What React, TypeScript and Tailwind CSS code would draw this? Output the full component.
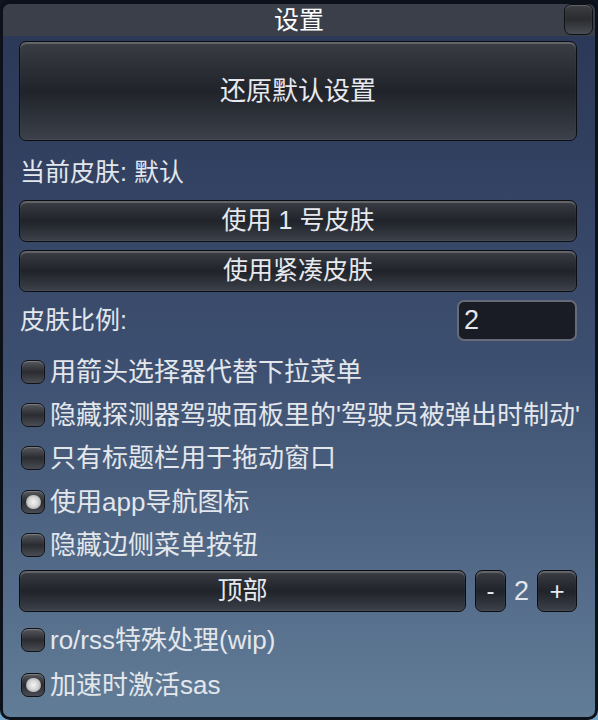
import React from "react";

const font = "font-['Liberation_Sans','Noto_Sans_CJK_SC',sans-serif]";

// KSP-ish bevelled button
const btn =
  "flex items-center justify-center rounded-[7px] border border-[#0b0d11] bg-linear-to-b from-[#3a3d43] via-[#202329] to-[#3c414b] shadow-[inset_0_2px_1px_rgba(255,255,255,0.22),inset_0_-1px_1px_rgba(255,255,255,0.06)] text-[#e6e9ee]";

interface CheckProps {
  label: string;
  checked?: boolean;
  className?: string;
}

const Check: React.FC<CheckProps> = ({ label, checked = false, className = "" }) => (
  <div className={`flex items-center gap-[5px] pl-[2px] ${className}`}>
    <div className="relative flex h-[24px] w-[24px] shrink-0 items-center justify-center rounded-[7px] border border-[#101216] bg-linear-to-b from-[#55585e] via-[#2a2c31] to-[#4a4d54] shadow-[inset_0_1px_1px_rgba(255,255,255,0.25)]">
      {checked && (
        <div className="h-[14px] w-[15px] rounded-full bg-[radial-gradient(circle,#f4f4f4_0%,#d6d6d6_45%,#8a8c90_100%)]" />
      )}
    </div>
    <span className="whitespace-nowrap text-[26px] leading-none text-[#e3e7ec]">{label}</span>
  </div>
);

export default function App() {
  return (
    <div className={`h-[720px] w-[598px] bg-linear-to-b from-[#0e1420] via-[#24344e] to-[#74a6cc] ${font}`}>
      <div className="flex h-full flex-col overflow-hidden rounded-[10px] border-[3px] border-t-[4px] border-[#0d1119] bg-linear-to-b from-[#2a3655] via-[#3d4f70] to-[#627d98]">
        {/* Title bar */}
        <div className="relative flex h-[32px] shrink-0 items-center justify-center rounded-t-[7px] bg-[#3b3f4a]">
          <span className="text-[25px] leading-none text-white">设置</span>
          <div className="absolute right-[2px] top-[0px] h-[31px] w-[29px] rounded-[7px] border border-[#0f1114] bg-linear-to-b from-[#3c3e43] via-[#2a2c30] to-[#4a4d53] shadow-[inset_0_1px_1px_rgba(255,255,255,0.2)]" />
        </div>

        {/* Body */}
        <div className="flex flex-col pl-[16px] pr-[18px]">
          <div className={`${btn} mt-[5px] h-[100px] text-[26px]`}>还原默认设置</div>

          <div className="flex h-[59px] items-center pl-[1px] pt-[4px] text-[25px] leading-none text-[#e3e7ec]">
            当前皮肤: 默认
          </div>

          <div className={`${btn} h-[42px] text-[25px]`}>使用 1 号皮肤</div>
          <div className={`${btn} mt-[8px] h-[42px] text-[25px]`}>使用紧凑皮肤</div>

          <div className="mt-[8px] flex h-[41px] items-center justify-between">
            <span className="pl-[1px] text-[25px] leading-none text-[#e3e7ec]">皮肤比例:</span>
            <div className="flex h-[41px] w-[120px] items-center rounded-[7px] border-2 border-[#656b78] bg-[#191c25] pl-[5px] text-[27px] leading-none text-[#e3e7ec]">
              2
            </div>
          </div>

          <div className="mt-[9px] flex flex-col">
            <Check className="h-[43px]" label="用箭头选择器代替下拉菜单" />
            <Check className="h-[43px]" label="隐藏探测器驾驶面板里的'驾驶员被弹出时制动'" />
            <Check className="h-[44px]" label="只有标题栏用于拖动窗口" />
            <Check className="h-[43px]" label="使用app导航图标" checked />
            <Check className="h-[43px]" label="隐藏边侧菜单按钮" />
          </div>

          <div className="mt-[4px] flex h-[42px] items-center">
            <div className={`${btn} h-[42px] w-[447px] text-[25px]`}>顶部</div>
            <div className={`${btn} ml-[9px] h-[42px] w-[31px] text-[24px]`}>-</div>
            <span className="w-[31px] text-center text-[27px] leading-none text-[#e3e7ec]">2</span>
            <div className={`${btn} h-[42px] w-[40px] text-[26px]`}>+</div>
          </div>

          <div className="mt-[6px] flex flex-col">
            <Check className="h-[44px]" label="ro/rss特殊处理(wip)" />
            <Check className="h-[45px]" label="加速时激活sas" checked />
          </div>
        </div>
      </div>
    </div>
  );
}
